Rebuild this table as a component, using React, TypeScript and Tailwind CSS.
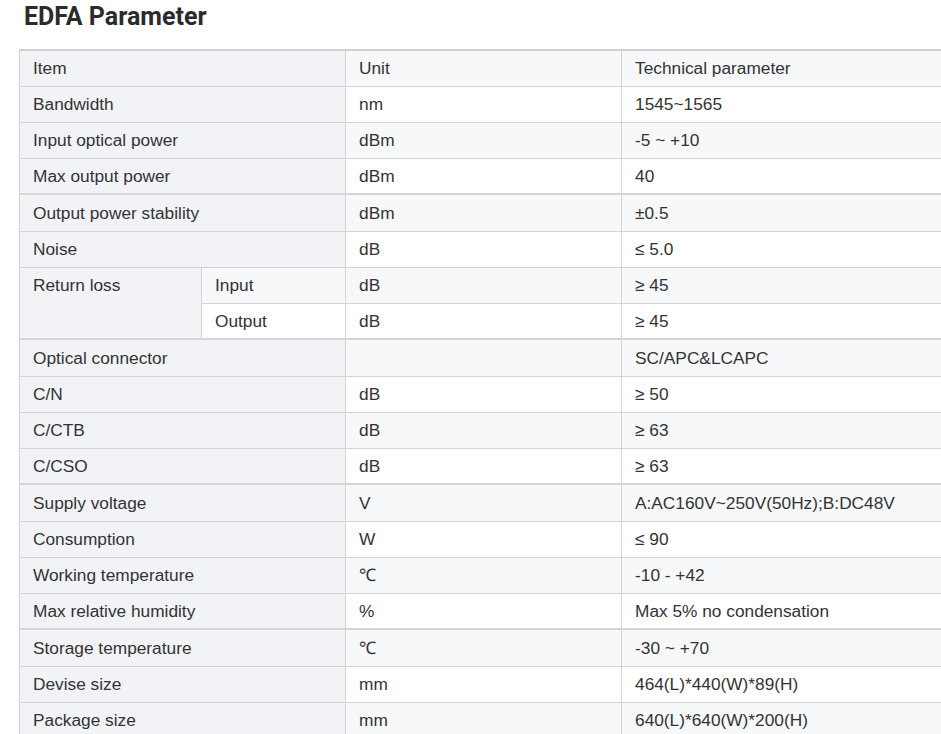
type Row = {
  item: string;
  sub?: string;
  unit: string;
  value: string;
  span?: number;
  skip?: boolean;
};

const groups: Row[][] = [
  [
    { item: "Item", unit: "Unit", value: "Technical parameter" },
    { item: "Bandwidth", unit: "nm", value: "1545~1565" },
    { item: "Input optical power", unit: "dBm", value: "-5 ~ +10" },
    { item: "Max output power", unit: "dBm", value: "40" },
  ],
  [
    { item: "Output power stability", unit: "dBm", value: "±0.5" },
    { item: "Noise", unit: "dB", value: "≤ 5.0" },
    { item: "Return loss", sub: "Input", unit: "dB", value: "≥ 45", span: 2 },
    { item: "", sub: "Output", unit: "dB", value: "≥ 45", skip: true },
  ],
  [
    { item: "Optical connector", unit: "", value: "SC/APC&LCAPC" },
    { item: "C/N", unit: "dB", value: "≥ 50" },
    { item: "C/CTB", unit: "dB", value: "≥ 63" },
    { item: "C/CSO", unit: "dB", value: "≥ 63" },
  ],
  [
    { item: "Supply voltage", unit: "V", value: "A:AC160V~250V(50Hz);B:DC48V" },
    { item: "Consumption", unit: "W", value: "≤ 90" },
    { item: "Working temperature", unit: "℃", value: "-10 - +42" },
    { item: "Max relative humidity", unit: "%", value: "Max 5% no condensation" },
  ],
  [
    { item: "Storage temperature", unit: "℃", value: "-30 ~ +70" },
    { item: "Devise size", unit: "mm", value: "464(L)*440(W)*89(H)" },
    { item: "Package size", unit: "mm", value: "640(L)*640(W)*200(H)" },
  ],
];

const cell = "border border-[#d5d5d5] px-[13px] py-0 leading-[20px]";

export default function App() {
  return (
    <div className="h-[734px] w-[941px] overflow-hidden bg-white font-['Liberation_Sans',Arial,sans-serif] text-[17.3px] text-[#333]">
      <h2 className="pl-[24px] pt-[1px] font-['Roboto',sans-serif] text-[25px] leading-[32px] font-bold text-[#2b2b2b]">
        EDFA Parameter
      </h2>
      <div className="mt-[16px] pl-[19px]">
        <table className="w-[960px] table-fixed border-collapse border-t-2 border-[#cfcfcf]">
          <colgroup>
            <col className="w-[182px]" />
            <col className="w-[144px]" />
            <col className="w-[276px]" />
            <col />
          </colgroup>
          {groups.map((rows, g) => (
            <tbody key={g} className={g > 0 ? "border-t-2 border-[#d5d5d5]" : ""}>
              {rows.map((r, i) => {
                const stripe = i % 2 === 0 ? "bg-[#f7f8fa]" : "bg-white";
                const h = g > 0 && i === 0 ? "h-[37px]" : "h-[36px]";
                return (
                  <tr key={i} className={h}>
                    {!r.skip && (
                      <td
                        colSpan={r.sub ? 1 : 2}
                        rowSpan={r.span ?? 1}
                        className={`${cell} bg-[#f2f3f7] ${r.span ? "pt-[7px] align-top" : "align-middle"}`}
                      >
                        {r.item}
                      </td>
                    )}
                    {r.sub && <td className={`${cell} ${stripe} align-middle`}>{r.sub}</td>}
                    <td className={`${cell} ${stripe} align-middle`}>{r.unit}</td>
                    <td className={`${cell} ${stripe} align-middle`}>{r.value}</td>
                  </tr>
                );
              })}
            </tbody>
          ))}
        </table>
      </div>
    </div>
  );
}
